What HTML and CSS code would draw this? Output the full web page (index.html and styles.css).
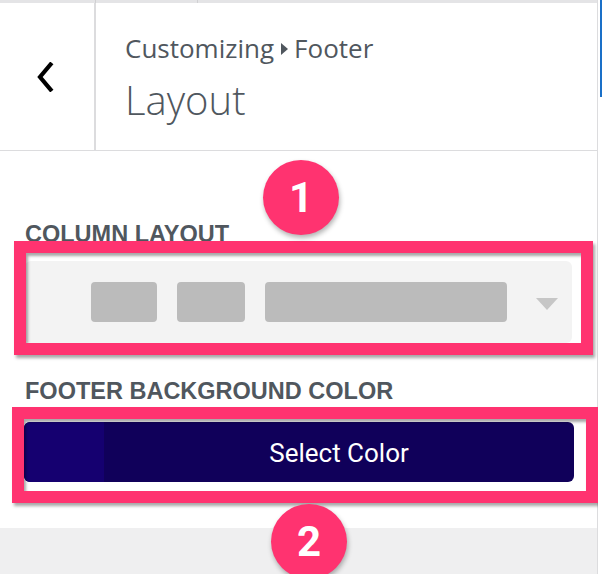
FILE: index.html
```html
<!DOCTYPE html>
<html>
<head>
<meta charset="utf-8">
<link rel="stylesheet" href="styles.css">
</head>
<body>
<div class="frame">
  <div class="panel">
    <div class="topbar">
      <span class="seg seg-a"></span>
      <span class="seg seg-b"></span>
      <span class="seg seg-c"></span>
    </div>
    <header class="header">
      <div class="back">
        <svg width="20" height="30" viewBox="0 0 20 30" aria-hidden="true">
          <path d="M15.5 2.5 L5 15 L15.5 27.5" fill="none" stroke="#000" stroke-width="4.2" stroke-linecap="square" stroke-linejoin="miter"/>
        </svg>
      </div>
      <div class="titles">
        <div class="crumb">Customizing<span class="caret"></span>Footer</div>
        <h1 class="title">Layout</h1>
      </div>
    </header>
    <main class="content">
      <div class="label label-first">COLUMN LAYOUT</div>
      <div class="select">
        <span class="col col-1"></span>
        <span class="col col-2"></span>
        <span class="col col-3"></span>
        <span class="arrow"></span>
      </div>
      <div class="label label-second">FOOTER BACKGROUND COLOR</div>
      <button class="color-btn">
        <span class="swatch"></span>
        <span class="btn-text">Select Color</span>
      </button>
    </main>
    <div class="bottom"></div>

    <div class="mark mark-1"></div>
    <div class="mark mark-2"></div>
    <div class="badge badge-1">1</div>
    <div class="badge badge-2">2</div>
  </div>
  <div class="side"><span class="scroll"></span></div>
</div>
</body>
</html>
```

FILE: styles.css
```css
html, body {
  margin: 0;
  padding: 0;
  width: 602px;
  height: 574px;
  overflow: hidden;
  background: #fff;
}

.frame {
  display: flex;
  width: 602px;
  height: 574px;
}

.panel {
  position: relative;
  width: 597px;
  height: 574px;
  border-right: 1px solid #dcdcde;
  border-left: 1px solid #ececec;
  box-sizing: content-box;
  display: flex;
  flex-direction: column;
  background: #fff;
  margin-left: -1px;
}

.topbar {
  display: flex;
  height: 3px;
  background: #e4e4e6;
}
.seg { display: block; height: 3px; }
.seg-a { width: 95px; border-right: 1px solid #d0d0d2; }
.seg-b { width: 101px; border-right: 1px solid #d0d0d2; }
.seg-c { flex: 1; }

.header {
  display: flex;
  border-bottom: 1px solid #dcdcde;
  box-sizing: border-box;
  height: 148px;
}

.back {
  width: 96px;
  border-right: 2px solid #dcdcde;
  display: flex;
  align-items: center;
  justify-content: center;
  box-sizing: border-box;
  padding-right: 4px;
  padding-bottom: 0;
}

.titles {
  padding-left: 29px;
  padding-top: 29px;
  font-family: "Open Sans", sans-serif;
  color: #50575e;
}

.crumb {
  font-size: 26px;
  line-height: 32px;
  display: flex;
  align-items: center;
}

.caret {
  display: inline-block;
  width: 0;
  height: 0;
  border-top: 6px solid transparent;
  border-bottom: 6px solid transparent;
  border-left: 7px solid #50575e;
  margin: 2px 6px 0 7px;
}

.title {
  margin: 0;
  font-size: 40px;
  font-weight: 300;
  line-height: 50px;
  color: #50575e;
  margin-top: 11px;
}

.content {
  flex: none;
  height: 377px;
  padding: 0 25px 0 24px;
  box-sizing: border-box;
}

.label {
  font-family: "Liberation Sans", Arial, sans-serif;
  font-weight: bold;
  font-size: 23.5px;
  line-height: 26px;
  color: #50575e;
  padding-left: 1px;
}

.label-first { margin-top: 70px; }
.label-second { margin-top: 35px; }

.select {
  margin-top: 14px;
  height: 82px;
  margin-left: 1px;
  background: #f3f3f3;
  border-radius: 6px;
  display: flex;
  align-items: center;
  padding-left: 66px;
  gap: 20px;
}

.col {
  display: block;
  height: 40px;
  background: #bbbbbb;
  border-radius: 4px;
}
.col-1 { width: 66px; }
.col-2 { width: 68px; }
.col-3 { width: 242px; }

.arrow {
  width: 0;
  height: 0;
  border-left: 11px solid transparent;
  border-right: 11px solid transparent;
  border-top: 12px solid #c6c6c6;
  margin-left: 9px;
  margin-top: 4px;
}

.color-btn {
  display: flex;
  margin-top: 18px;
  width: 550px;
  height: 60px;
  padding: 0;
  border: 0;
  border-radius: 6px;
  overflow: hidden;
  background: #10005a;
  cursor: pointer;
}

.swatch {
  display: block;
  width: 80px;
  height: 60px;
  background: #150070;
}

.btn-text {
  flex: 1;
  display: flex;
  align-items: center;
  justify-content: center;
  font-family: Roboto, "Liberation Sans", sans-serif;
  font-size: 26px;
  color: #fff;
  padding-top: 1px;
}

.bottom {
  flex: 1;
  background: #efeff0;
}

/* annotation overlays */
.mark {
  position: absolute;
  border: 12px solid #ff3370;
  box-sizing: border-box;
  box-shadow: 2px 3px 3px rgba(0,0,0,0.35), inset 2px 3px 3px rgba(0,0,0,0.35);
}
.mark-1 { left: 14px; top: 241px; width: 579px; height: 114px; }
.mark-2 { left: 12px; top: 407px; width: 586px; height: 96px; }

.badge {
  position: absolute;
  width: 76px;
  height: 75px;
  border-radius: 50%;
  background: #ff3370;
  box-shadow: 1px 3px 5px rgba(0,0,0,0.3);
  color: #fff;
  font-family: Roboto, "Liberation Sans", sans-serif;
  font-weight: bold;
  font-size: 42px;
  display: flex;
  align-items: center;
  justify-content: center;
}
.badge-1 { left: 263px; top: 160px; }
.badge-2 { left: 271px; top: 504px; }

.side {
  flex: 1;
  position: relative;
  background: #fff;
}
.scroll {
  position: absolute;
  right: 0;
  top: 0;
  width: 2px;
  height: 97px;
  background: #1a70c8;
}
```
